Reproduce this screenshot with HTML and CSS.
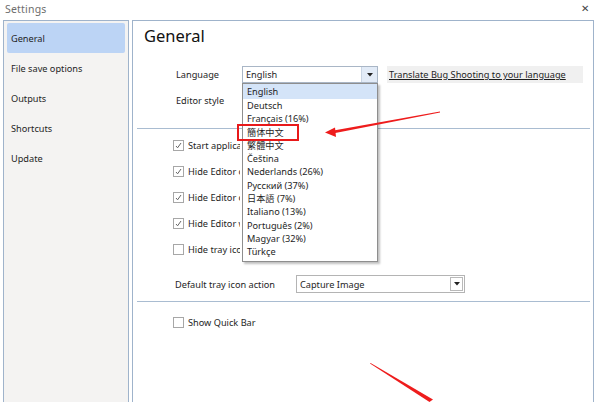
FILE: index.html
```html
<!DOCTYPE html>
<html lang="en">
<head>
<meta charset="utf-8">
<title>Settings</title>
<link rel="stylesheet" href="styles.css">
</head>
<body>
<div class="window">
  <header class="titlebar">
    <span class="title">Settings</span>
    <span class="close">&#x2715;</span>
  </header>
  <div class="main">
    <nav class="sidebar">
      <div class="nav-item active">General</div>
      <div class="nav-item">File save options</div>
      <div class="nav-item">Outputs</div>
      <div class="nav-item">Shortcuts</div>
      <div class="nav-item">Update</div>
    </nav>
    <section class="content">
      <h1 class="heading">General</h1>
      <div class="form-row row-lang">
        <span class="label">Language</span>
        <div class="combo combo-lang">
          <span class="combo-text">English</span>
          <span class="combo-btn"><svg width="6" height="4" viewBox="0 0 6 4"><path d="M0 0h6L3 3.5z" fill="#222"/></svg></span>
          <ul class="popup">
            <li class="hl">English</li>
            <li>Deutsch</li>
            <li>Français (16%)</li>
            <li class="cjk">簡体中文</li>
            <li class="cjk">繁體中文</li>
            <li>Čeština</li>
            <li>Nederlands (26%)</li>
            <li>Русский (37%)</li>
            <li><span class="cjk">日本語</span> (7%)</li>
            <li>Italiano (13%)</li>
            <li>Português (2%)</li>
            <li>Magyar (32%)</li>
            <li>Türkçe</li>
          </ul>
        </div>
        <a class="link">Translate Bug Shooting to your language</a>
      </div>
      <div class="form-row row-editor">
        <span class="label">Editor style</span>
      </div>
      <div class="sep sep-1"></div>
      <div class="checks">
        <div class="check-row"><span class="cb checked"><svg width="7" height="7" viewBox="0 0 7 7"><path d="M1 4l1.6 1.8L6 1" fill="none" stroke="#666" stroke-width="1"/></svg></span><span class="cut">Start application with Windows</span></div>
        <div class="check-row"><span class="cb checked"><svg width="7" height="7" viewBox="0 0 7 7"><path d="M1 4l1.6 1.8L6 1" fill="none" stroke="#666" stroke-width="1"/></svg></span><span class="cut">Hide Editor on capture</span></div>
        <div class="check-row"><span class="cb checked"><svg width="7" height="7" viewBox="0 0 7 7"><path d="M1 4l1.6 1.8L6 1" fill="none" stroke="#666" stroke-width="1"/></svg></span><span class="cut">Hide Editor on close</span></div>
        <div class="check-row"><span class="cb checked"><svg width="7" height="7" viewBox="0 0 7 7"><path d="M1 4l1.6 1.8L6 1" fill="none" stroke="#666" stroke-width="1"/></svg></span><span class="cut">Hide Editor when saved</span></div>
        <div class="check-row"><span class="cb"></span><span class="cut">Hide tray icon</span></div>
      </div>
      <div class="form-row row-tray">
        <span class="label label-tray">Default tray icon action</span>
        <div class="combo combo-tray">
          <span class="combo-text">Capture Image</span>
          <span class="combo-btn2"><svg width="6" height="4" viewBox="0 0 6 4"><path d="M0 0h6L3 3.5z" fill="#222"/></svg></span>
        </div>
      </div>
      <div class="sep sep-2"></div>
      <div class="check-row quick"><span class="cb"></span><span>Show Quick Bar</span></div>
    </section>
  </div>
  <svg class="annotations" width="595" height="419" viewBox="0 0 595 419">
    <rect x="238" y="125" width="60" height="15" fill="none" stroke="#e8191a" stroke-width="2"/>
    <polygon points="440,111.6 440,112.4 334,133.2 333.6,130.6" fill="#ee1c1c"/>
    <polygon points="325,132.6 335,127.6 336,137" fill="#ee1c1c"/>
    <polygon points="370,363.4 370.6,363 433,399.5 429.5,402" fill="#ee1c1c"/>
  </svg>
</div>
</body>
</html>
```

FILE: styles.css
```css
* { box-sizing: border-box; }
html, body { margin: 0; padding: 0; background: #fff; }
body {
  font-family: "Noto Sans", "Noto Sans CJK SC", sans-serif;
  font-size: 9.2px;
  color: #1e1e1e;
}
.window {
  position: relative;
  width: 595px;
  height: 419px;
  overflow: hidden;
}
.titlebar {
  height: 20px;
  display: flex;
  align-items: center;
  justify-content: space-between;
  padding: 0 6px 2px 5px;
}
.title { font-size: 10.5px; color: #6d6d6d; letter-spacing: 0.2px; }
.close { font-size: 10px; color: #444; margin-top: -3px; }
.main {
  display: flex;
  gap: 3px;
  height: 382px;
  padding-left: 3px;
}
.sidebar {
  width: 126px;
  border: 1px solid #9fb3cb;
  border-bottom: none;
  background: #f4f3f2;
  padding: 2px 3px;
}
.nav-item {
  height: 30px;
  display: flex;
  align-items: center;
  padding-left: 4px;
}
.nav-item.active {
  background: #bcd4f5;
  border-radius: 2px;
}
.content {
  position: relative;
  width: 462px;
  border: 1px solid #9fb3cb;
  border-bottom: none;
  background: #fff;
}
.heading {
  margin: 3px 0 0 11px;
  font-size: 16.5px;
  line-height: 24px;
  font-weight: normal;
  color: #111;
}
.form-row {
  display: flex;
  align-items: center;
  margin-left: 43px;
}
.row-lang { margin-top: 18px; height: 17px; }
.row-editor { margin-top: 9px; height: 17px; }
.label { width: 66px; flex: none; }
.combo {
  position: relative;
  display: flex;
  align-items: center;
  height: 17px;
  border: 1px solid #a9b6c6;
  background: #fff;
}
.combo-lang { width: 136px; }
.combo-text { flex: 1; padding-left: 3px; }
.combo-btn {
  width: 16px;
  height: 100%;
  display: flex;
  align-items: center;
  justify-content: center;
  background: #e2ebf7;
  border-left: 1px solid #c9d5e4;
}
.popup {
  position: absolute;
  top: 16px;
  left: -1px;
  width: 136px;
  margin: 0;
  padding: 0 0 2px;
  list-style: none;
  background: #fff;
  border: 1px solid #8e8e8e;
  box-shadow: 2px 2px 2px rgba(0, 0, 0, 0.25);
  z-index: 5;
}
.popup li {
  height: 13.3px;
  line-height: 13.3px;
  padding-left: 4px;
  white-space: nowrap;
}
.popup li.hl { background: #d4e4f8; height: 15px; line-height: 15px; }
.cjk { font-family: "Noto Sans CJK SC", sans-serif; }
.link {
  margin-left: 9px;
  width: 196px;
  height: 17px;
  display: flex;
  align-items: center;
  padding-left: 2px;
  background: #f0f0f0;
  text-decoration: underline;
  color: #1e1e1e;
}
.sep {
  height: 1px;
  background: #a9bcd1;
  margin-left: 4px;
  margin-right: 3px;
}
.sep-1 { margin-top: 19px; }
.sep-2 { margin-top: 8px; }
.checks { padding-top: 3px; }
.check-row {
  height: 26px;
  display: flex;
  align-items: center;
  margin-left: 40px;
  white-space: nowrap;
}
.cut {
  display: block;
  width: 52px;
  overflow: hidden;
}
.cb {
  width: 11px;
  height: 11px;
  border: 1px solid #a7a7a7;
  background: #fff;
  margin-right: 4px;
  display: flex;
  align-items: center;
  justify-content: center;
  flex: none;
}
.row-tray { margin-top: 13px; height: 18px; margin-left: 42px; }
.label-tray { width: 121px; }
.combo-tray {
  width: 169px;
  height: 18px;
  border: 1px solid #b4b4b4;
}
.combo-btn2 {
  width: 13px;
  height: 14px;
  margin-right: 1px;
  display: flex;
  align-items: center;
  justify-content: center;
  border: 1px solid #b9b9b9;
  background: #fff;
}
.quick { margin-top: 7px; }
.annotations {
  position: absolute;
  left: 0;
  top: 0;
  pointer-events: none;
  z-index: 10;
}
```
